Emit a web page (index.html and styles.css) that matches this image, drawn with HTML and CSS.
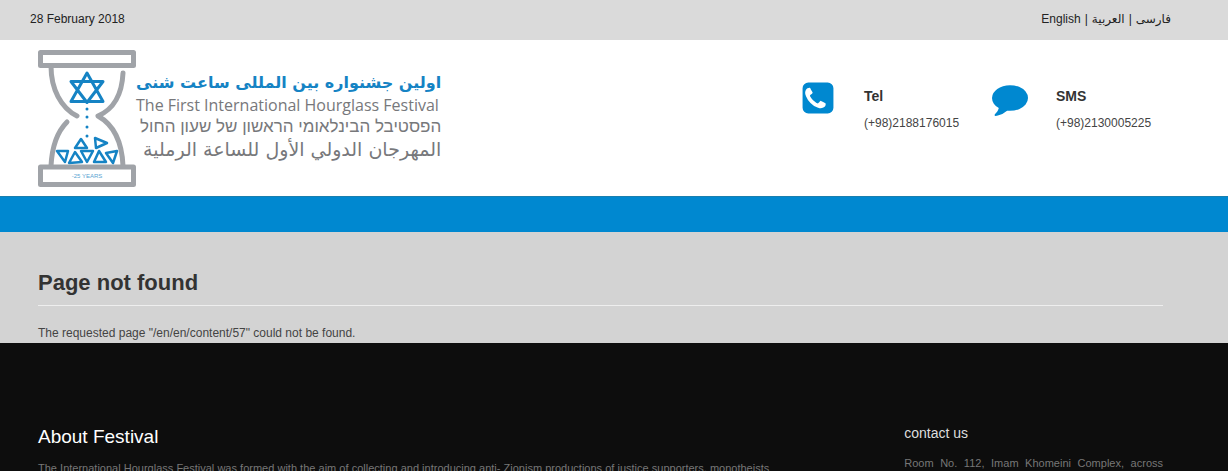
FILE: index.html
```
<!DOCTYPE html>
<html lang="en">
<head>
	<meta charset="utf-8">
	<meta name="viewport" content="width=device-width, initial-scale=1.0">
	<title>Page not found</title>
	<link rel="stylesheet" href="styles.css">
</head>
<body>
	<div class="top-bar">
		<span class="date">28 February 2018</span>
		<nav class="languages">
			<a href="#">English</a><span class="sep">|</span><a href="#" lang="ar">العربية</a><span class="sep">|</span><a href="#" lang="fa">فارسی</a>
		</nav>
	</div>

	<header class="header">
		<a href="#" class="logo">
			<svg class="hourglass" viewBox="0 0 98 138" width="98" height="138" aria-hidden="true">
				<g fill="none" stroke="#a0a3a8" stroke-width="5" stroke-linejoin="round">
					<rect x="2.500" y="3.500" width="93" height="13"/>
					<rect x="2.500" y="118" width="93" height="17.500"/>
					<g stroke-linecap="round">
						<path d="M13 17C13 40 23 59 39 67"/>
						<path d="M85 24C84 46 76 60 60 67C76 76 84 93 85 117"/>
						<path d="M29 73C19 83 14 97 13 117"/>
					</g>
				</g>
				<g fill="none" stroke="#1583c4" stroke-linejoin="round">
					<path stroke-width="3" d="M49 24L65 52.500H33ZM49 53.500L33 32.500H65Z"/>
					<g stroke-width="2.500">
						<path d="M43 90L49 99L37 99Z"/>
						<path d="M57 89L69 94L58 99Z"/>
						<path d="M19 102L30 102L27 113Z"/>
						<path d="M37 103L44 113L31 114Z"/>
						<path d="M43 102L55 102L49 113Z"/>
						<path d="M61 102L68 113L56 113Z"/>
						<path d="M68 104L79 102L75 114Z"/>
					</g>
				</g>
				<g fill="#1583c4">
					<circle cx="49" cy="60" r="1.500"/>
					<circle cx="49" cy="68" r="1.500"/>
					<circle cx="49" cy="78" r="1.500"/>
					<circle cx="49" cy="87" r="1.500"/>
				</g>
				<text class="years" x="49" y="129" text-anchor="middle">-25 YEARS</text>
			</svg>
			<span class="logo-text">
				<span class="logo-fa" lang="fa" dir="rtl">اولین جشنواره بین المللی ساعت شنی</span>
				<span class="logo-en">The First International Hourglass Festival</span>
				<span class="logo-he" lang="he" dir="rtl">הפסטיבל הבינלאומי הראשון של שעון החול</span>
				<span class="logo-ar" lang="ar" dir="rtl">المهرجان الدولي الأول للساعة الرملية</span>
			</span>
		</a>

		<div class="contacts">
			<div class="contact">
				<svg class="contact-icon" viewBox="0 0 1792 1792" aria-hidden="true"><path d="M1280 1193q0-11-2-16-3-8-38.500-29.500t-88.500-49.500l-53-29q-5-3-19-13t-25-15-21-5q-18 0-47 32.500t-57 65.500-44 33q-7 0-16.500-3.500t-15.500-6.500-17-9.500-14-8.500q-99-55-170.500-126.500t-126.500-170.500q-2-3-8.500-14t-9.500-17-6.500-15.500-3.500-16.500q0-13 20.500-33.500t45-38.500 45-39.500 20.500-36.500q0-10-5-21t-15-25-13-19q-3-6-15-28.500t-25-45.500-26.500-47.500-25-40.500-16.500-18-16-2q-48 0-101 22-46 21-80 94.500t-34 130.500q0 16 2.500 34t5 30.500 9 33 10 29.500 12.500 33 11 30q60 164 216.500 320.500t320.500 216.500q6 2 30 11t33 12.500 29.500 10 33 9 30.500 5 34 2.500q57 0 130.500-34t94.500-80q22-53 22-101zm384-777v960q0 119-84.500 203.500t-203.500 84.500h-960q-119 0-203.500-84.500t-84.500-203.500v-960q0-119 84.500-203.500t203.500-84.500h960q119 0 203.500 84.500t84.500 203.500z"/></svg>
				<div>
					<h4>Tel</h4>
					<p>(+98)2188176015</p>
				</div>
			</div>
			<div class="contact">
				<svg class="contact-icon" viewBox="0 0 1792 1792" aria-hidden="true"><path d="M1792 896q0 174-120 321.500t-326 233-450 85.500q-70 0-145-8-198 175-460 242-49 14-114 22-17 2-30.500-9t-17.500-29v-1q-3-4-.5-12t2-10 4.500-9.500l6-9 7-8.500 8-9q7-8 31-34.500t34.500-38 31-39.500 32.500-51 27-59 26-76q-157-89-247.500-220t-90.500-281q0-130 71-248.500t191-204.500 286-136.500 348-50.500q244 0 450 85.500t326 233 120 321.500z"/></svg>
				<div>
					<h4>SMS</h4>
					<p>(+98)2130005225</p>
				</div>
			</div>
		</div>
	</header>

	<div class="menu-bar"></div>

	<main class="content">
		<h1>Page not found</h1>
		<p>The requested page "/en/en/content/57" could not be found.</p>
	</main>

	<footer class="footer">
		<section class="about">
			<h2>About Festival</h2>
			<p>The International Hourglass Festival was formed with the aim of collecting and introducing anti- Zionism productions of justice supporters, monotheists</p>
		</section>
		<section class="address">
			<h3>contact us</h3>
			<p>Room No. 112, Imam Khomeini Complex, across</p>
		</section>
	</footer>
</body>
</html>
```
FILE: styles.css
```
* {
	box-sizing: border-box;
}

body {
	margin: 0;
	height: 100vh;
	display: flex;
	flex-direction: column;
	background: #0d0d0d;
	color: #333;
	font-family: "Liberation Sans", Arial, sans-serif;
	font-size: 12px;
	line-height: 20px;
}

h1, h2, h3, h4, p {
	margin: 0;
}

a {
	color: inherit;
	text-decoration: none;
}

.top-bar {
	display: flex;
	justify-content: space-between;
	align-items: center;
	height: 40px;
	padding: 0 57px 2px 30px;
	background: #dadada;
	color: #222;
}

.languages {
	display: flex;
	font-family: "Liberation Sans", "DejaVu Sans", sans-serif;
}

.sep {
	margin: 0 4px;
}

.header {
	display: flex;
	justify-content: space-between;
	align-items: flex-start;
	padding: 9px 65px 9px 38px;
	background: #fff;
}

.logo {
	display: flex;
}

.hourglass {
	flex: none;
}

.years {
	font-size: 6px;
	fill: #5aa5d2;
}

.logo-text {
	display: flex;
	flex-direction: column;
	padding-top: 22px;
	white-space: nowrap;
	color: #77787b;
}

.logo-fa {
	font: bold 16px/24px "DejaVu Sans", sans-serif;
	color: #1583c4;
}

.logo-en {
	font: 16px/20px "Open Sans", "Noto Sans", sans-serif;
}

.logo-he {
	font: 17px/24px "Liberation Sans", "DejaVu Sans", sans-serif;
}

.logo-ar {
	font: 19px/20px "DejaVu Sans", sans-serif;
}

.contacts {
	display: flex;
	padding-top: 31px;
}

.contact {
	display: flex;
	width: 192px;
}

.contact:last-child {
	width: 171px;
}

.contact-icon {
	flex: none;
	width: 36px;
	height: 36px;
	margin-right: 28px;
	fill: #0088d0;
}

.contact h4 {
	padding-top: 6px;
	font-size: 14px;
}

.contact p {
	padding-top: 7px;
	color: #444;
}

.menu-bar {
	flex: none;
	height: 36px;
	background: #0088d0;
	border-top: 1px solid #1a7fae;
}

.content {
	padding: 36px 65px 0 38px;
	background: #d3d3d3;
}

.content h1 {
	padding-bottom: 8px;
	border-bottom: 1px solid #eee;
	font-size: 22px;
	line-height: 29px;
}

.content p {
	padding-top: 17px;
	color: #444;
}

/* the footer runs on below the fold */
.footer {
	flex: 1;
	min-height: 0;
	display: flex;
	justify-content: space-between;
	padding: 80px 65px 0 38px;
	overflow: hidden;
	color: #777;
}

.footer p {
	font-size: 11px;
	text-align-last: justify;
}

.about {
	width: 65%;
}

.about h2 {
	color: #fff;
	font-size: 19px;
	font-weight: normal;
	line-height: 28px;
}

.about p {
	padding-top: 7px;
}

.address {
	width: 23%;
}

.address h3 {
	color: #ddd;
	font-size: 14px;
	font-weight: normal;
}

.address p {
	padding-top: 10px;
}
```
